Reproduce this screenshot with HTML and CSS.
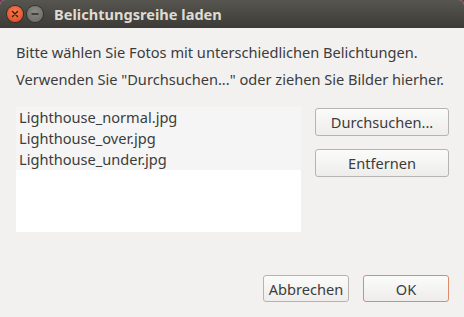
FILE: index.html
```html
<!DOCTYPE html>
<html lang="de">
<head>
  <meta charset="UTF-8">
  <title>Belichtungsreihe laden</title>
  <link rel="stylesheet" href="styles.css">
</head>
<body>
  <div class="window">
    <!-- Title bar -->
    <div class="titlebar">
      <div class="win-btn close">
        <svg width="8" height="8" viewBox="0 0 8 8"><path d="M1.5 1.5 L6.5 6.5 M6.5 1.5 L1.5 6.5" stroke="#3a1a10" stroke-width="1.4" stroke-linecap="round"/></svg>
      </div>
      <div class="win-btn minimize">
        <svg width="8" height="8" viewBox="0 0 8 8"><path d="M1 4 L7 4" stroke="#2e2d2a" stroke-width="1.4" stroke-linecap="round"/></svg>
      </div>
      <div class="title">Belichtungsreihe laden</div>
    </div>

    <div class="content">
      <p class="intro">Bitte wählen Sie Fotos mit unterschiedlichen Belichtungen.</p>
      <p class="intro">Verwenden Sie "Durchsuchen..." oder ziehen Sie Bilder hierher.</p>

      <div class="files">
        <ul class="file-list">
          <li>Lighthouse_normal.jpg</li>
          <li>Lighthouse_over.jpg</li>
          <li>Lighthouse_under.jpg</li>
        </ul>
        <div class="side-buttons">
          <button class="btn">Durchsuchen...</button>
          <button class="btn">Entfernen</button>
        </div>
      </div>

      <div class="actions">
        <button class="btn cancel">Abbrechen</button>
        <button class="btn ok">OK</button>
      </div>
    </div>
  </div>
</body>
</html>
```

FILE: styles.css
```css
body {
  margin: 0;
  background: #7a2e5c;
  font-family: "Noto Sans", "DejaVu Sans", sans-serif;
  font-size: 14.6px;
  color: #3c3c3c;
}

.window {
  width: 464px;
  height: 317px;
  background: #f2f1f0;
  border-radius: 5px 5px 0 0;
  overflow: hidden;
  display: flex;
  flex-direction: column;
}

.titlebar {
  height: 28px;
  background: linear-gradient(#56554f, #3c3b37);
  display: flex;
  align-items: center;
  padding-left: 7px;
  gap: 4px;
}

.win-btn {
  width: 16px;
  height: 16px;
  border-radius: 50%;
  display: flex;
  align-items: center;
  justify-content: center;
}

.close {
  background: radial-gradient(circle at 50% 35%, #f47a50, #e0491d);
  box-shadow: 0 0 0 1px #3a2a22;
}

.minimize {
  background: radial-gradient(circle at 50% 35%, #8a8984, #68675f);
  box-shadow: 0 0 0 1px #33322e;
}

.title {
  margin-left: 7px;
  color: #dfdbd2;
  font-weight: bold;
  font-size: 14.6px;
}

.content {
  flex: 1;
  padding: 14px 15px 15px 16px;
  display: flex;
  flex-direction: column;
}

.intro {
  margin: 0 0 7px;
  line-height: 20px;
}

.files {
  display: flex;
  gap: 14px;
  margin-top: 11px;
}

.file-list {
  list-style: none;
  margin: 0;
  padding: 0;
  width: 285px;
  height: 125px;
  background: #fff;
}

.file-list li {
  background: #f5f5f5;
  height: 21px;
  line-height: 21px;
  padding-left: 3px;
}

.side-buttons {
  display: flex;
  flex-direction: column;
  gap: 13px;
  padding-top: 1px;
}

.btn {
  font-family: inherit;
  font-size: 14.6px;
  color: #3c3c3c;
  background: linear-gradient(#fbfbfa, #eeedec);
  border: 1px solid #b6b4b0;
  border-radius: 3px;
  height: 28px;
  padding: 0;
}

.side-buttons .btn {
  width: 134px;
}

.actions {
  margin-top: auto;
  display: flex;
  justify-content: flex-end;
  gap: 14px;
}

.actions .btn {
  width: 86px;
  height: 27px;
}

.ok {
  border-color: #e08a6c;
}
```
